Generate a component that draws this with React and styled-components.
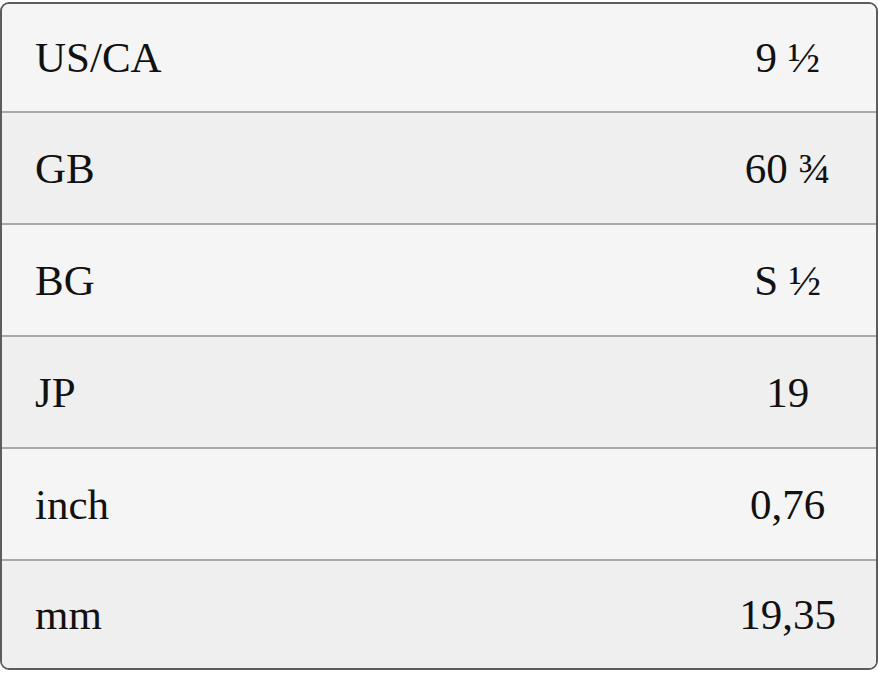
import styled, { createGlobalStyle } from "styled-components";

const GlobalStyle = createGlobalStyle`
  html, body {
    margin: 0;
    padding: 0;
    background: #ffffff;
  }
  body {
    font-family: "Liberation Serif", "DejaVu Serif", serif;
  }
`;

// Outer frame with the dark rounded border
const Frame = styled.div`
  border: 2px solid #5c5c5c;
  border-radius: 9px;
  overflow: hidden;
  margin-top: 2px;
`;

const SizeTable = styled.table`
  width: 100%;
  border-collapse: collapse;
  font-size: 43px;
  color: #111111;
`;

// Rows are 112px apart; the first and last sit a little tighter against the frame
const Row = styled.tr`
  height: 112px;
  background: ${(props) => (props.$shade ? "#efefef" : "#f5f5f5")};

  &:first-child,
  &:last-child {
    height: 108px;
  }

  &:not(:first-child) td {
    border-top: 2px solid #a9a9a9;
  }
`;

const Label = styled.td`
  padding: 0 33px;
  text-align: left;
  vertical-align: middle;
`;

const Value = styled.td`
  padding: 0 40px 0 36px;
  text-align: center;
  vertical-align: middle;
  white-space: nowrap;
  width: 1px;
`;

const sizes = [
  { label: "US/CA", value: "9 ½" },
  { label: "GB", value: "60 ¾" },
  { label: "BG", value: "S ½" },
  { label: "JP", value: "19" },
  { label: "inch", value: "0,76" },
  { label: "mm", value: "19,35" },
];

export default function App() {
  return (
    <>
      <GlobalStyle />
      <Frame>
        <SizeTable>
          <tbody>
            {sizes.map((row, i) => (
              <Row key={row.label} $shade={i % 2 === 1}>
                <Label>{row.label}</Label>
                <Value>{row.value}</Value>
              </Row>
            ))}
          </tbody>
        </SizeTable>
      </Frame>
    </>
  );
}
